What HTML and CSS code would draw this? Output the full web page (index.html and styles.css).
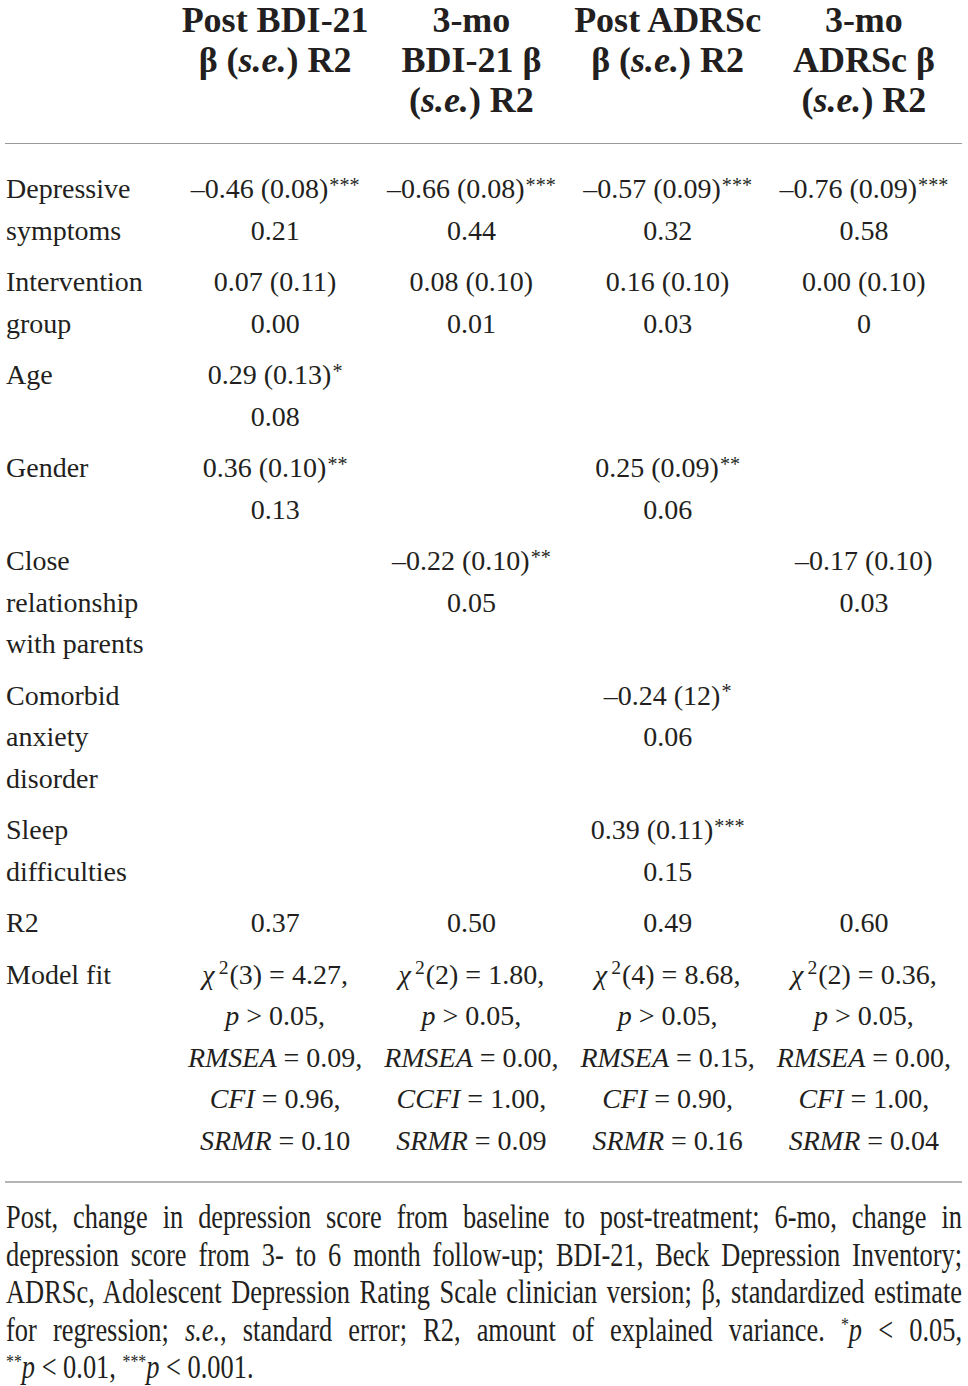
FILE: index.html
```html
<!DOCTYPE html>
<html lang="en">
<head>
  <meta charset="UTF-8">
  <meta name="viewport" content="width=device-width, initial-scale=1.0">
  <title>Predictors of change in depression</title>
  <link rel="stylesheet" href="styles.css">
</head>
<body>
  <table class="results">
    <thead>
      <tr>
        <th class="label"></th>
        <th>Post BDI-21<br>β (<i>s.e.</i>) R2</th>
        <th>3-mo<br>BDI-21 β<br>(<i>s.e.</i>) R2</th>
        <th>Post ADRSc<br>β (<i>s.e.</i>) R2</th>
        <th>3-mo<br>ADRSc β<br>(<i>s.e.</i>) R2</th>
      </tr>
    </thead>
    <tbody>
      <tr>
        <td class="label">Depressive symptoms</td>
        <td>–0.46 (0.08)<sup>***</sup><br>0.21</td>
        <td>–0.66 (0.08)<sup>***</sup><br>0.44</td>
        <td>–0.57 (0.09)<sup>***</sup><br>0.32</td>
        <td>–0.76 (0.09)<sup>***</sup><br>0.58</td>
      </tr>
      <tr>
        <td class="label">Intervention group</td>
        <td>0.07 (0.11)<br>0.00</td>
        <td>0.08 (0.10)<br>0.01</td>
        <td>0.16 (0.10)<br>0.03</td>
        <td>0.00 (0.10)<br>0</td>
      </tr>
      <tr>
        <td class="label">Age</td>
        <td>0.29 (0.13)<sup>*</sup><br>0.08</td>
        <td></td>
        <td></td>
        <td></td>
      </tr>
      <tr>
        <td class="label">Gender</td>
        <td>0.36 (0.10)<sup>**</sup><br>0.13</td>
        <td></td>
        <td>0.25 (0.09)<sup>**</sup><br>0.06</td>
        <td></td>
      </tr>
      <tr>
        <td class="label">Close relationship with parents</td>
        <td></td>
        <td>–0.22 (0.10)<sup>**</sup><br>0.05</td>
        <td></td>
        <td>–0.17 (0.10)<br>0.03</td>
      </tr>
      <tr>
        <td class="label">Comorbid anxiety disorder</td>
        <td></td>
        <td></td>
        <td>–0.24 (12)<sup>*</sup><br>0.06</td>
        <td></td>
      </tr>
      <tr>
        <td class="label">Sleep difficulties</td>
        <td></td>
        <td></td>
        <td>0.39 (0.11)<sup>***</sup><br>0.15</td>
        <td></td>
      </tr>
      <tr>
        <td class="label">R2</td>
        <td>0.37</td>
        <td>0.50</td>
        <td>0.49</td>
        <td>0.60</td>
      </tr>
      <tr>
        <td class="label">Model fit</td>
        <td><i>χ</i><sup class="sq">2</sup>(3) = 4.27,<br><i>p</i> &gt; 0.05,<br><i>RMSEA</i> = 0.09,<br><i>CFI</i> = 0.96,<br><i>SRMR</i> = 0.10</td>
        <td><i>χ</i><sup class="sq">2</sup>(2) = 1.80,<br><i>p</i> &gt; 0.05,<br><i>RMSEA</i> = 0.00,<br><i>CCFI</i> = 1.00,<br><i>SRMR</i> = 0.09</td>
        <td><i>χ</i><sup class="sq">2</sup>(4) = 8.68,<br><i>p</i> &gt; 0.05,<br><i>RMSEA</i> = 0.15,<br><i>CFI</i> = 0.90,<br><i>SRMR</i> = 0.16</td>
        <td><i>χ</i><sup class="sq">2</sup>(2) = 0.36,<br><i>p</i> &gt; 0.05,<br><i>RMSEA</i> = 0.00,<br><i>CFI</i> = 1.00,<br><i>SRMR</i> = 0.04</td>
      </tr>
    </tbody>
  </table>

  <div class="note-wrap">
    <p class="note">
      <span class="line">Post, change in depression score from baseline to post-treatment; 6-mo, change in</span>
      <span class="line">depression score from 3- to 6 month follow-up; BDI-21, Beck Depression Inventory;</span>
      <span class="line">ADRSc, Adolescent Depression Rating Scale clinician version; β, standardized estimate</span>
      <span class="line">for regression; <i>s.e.</i>, standard error; R2, amount of explained variance. <sup>*</sup><i>p</i> &lt; 0.05,</span>
      <span class="line line-end"><sup>**</sup><i>p</i> &lt; 0.01, <sup>***</sup><i>p</i> &lt; 0.001.</span>
    </p>
  </div>
</body>
</html>
```

FILE: styles.css
```css
body {
  margin: 0;
  font-family: 'Liberation Serif', 'Times New Roman', serif;
  color: #231f20;
  background-color: #ffffff;
}

.results {
  border-collapse: collapse;
  table-layout: fixed;
  width: 957px;
  margin-left: 5px;
}

.results th {
  font-size: 36px;
  line-height: 40px;
  font-weight: bold;
  text-align: center;
  vertical-align: top;
  padding: 0 0 23px;
  border-bottom: 1px solid #9a9a9a;
}

.results th.label {
  width: 172px;
}

.results td {
  font-size: 28px;
  line-height: 41.5px;
  text-align: center;
  vertical-align: top;
  padding: 5px 0;
}

.results td.label {
  text-align: left;
  padding-left: 1px;
}

.results tbody tr:first-child td {
  padding-top: 24px;
}

.results tbody tr:last-child td {
  padding-bottom: 20px;
  border-bottom: 2px solid #b5b5b5;
}

sup {
  font-size: 0.6em;
  line-height: 0;
  vertical-align: 0.5em;
}

.results sup {
  font-size: 0.72em;
  vertical-align: 0.32em;
  margin-left: 1px;
}

.results sup.sq {
  font-size: 0.7em;
  vertical-align: 0.5em;
  margin-left: 4px;
  margin-right: 1px;
}

.note-wrap {
  width: 956px;
  margin: 16px 0 0 6px;
  overflow: hidden;
}

.note {
  width: 1195px;
  margin: 0;
  font-size: 33px;
  line-height: 37.5px;
  text-align: justify;
  text-align-last: justify;
  transform: scaleX(0.8);
  transform-origin: 0 0;
}

.note .line {
  display: block;
}

.note .line-end {
  text-align-last: left;
}
```
